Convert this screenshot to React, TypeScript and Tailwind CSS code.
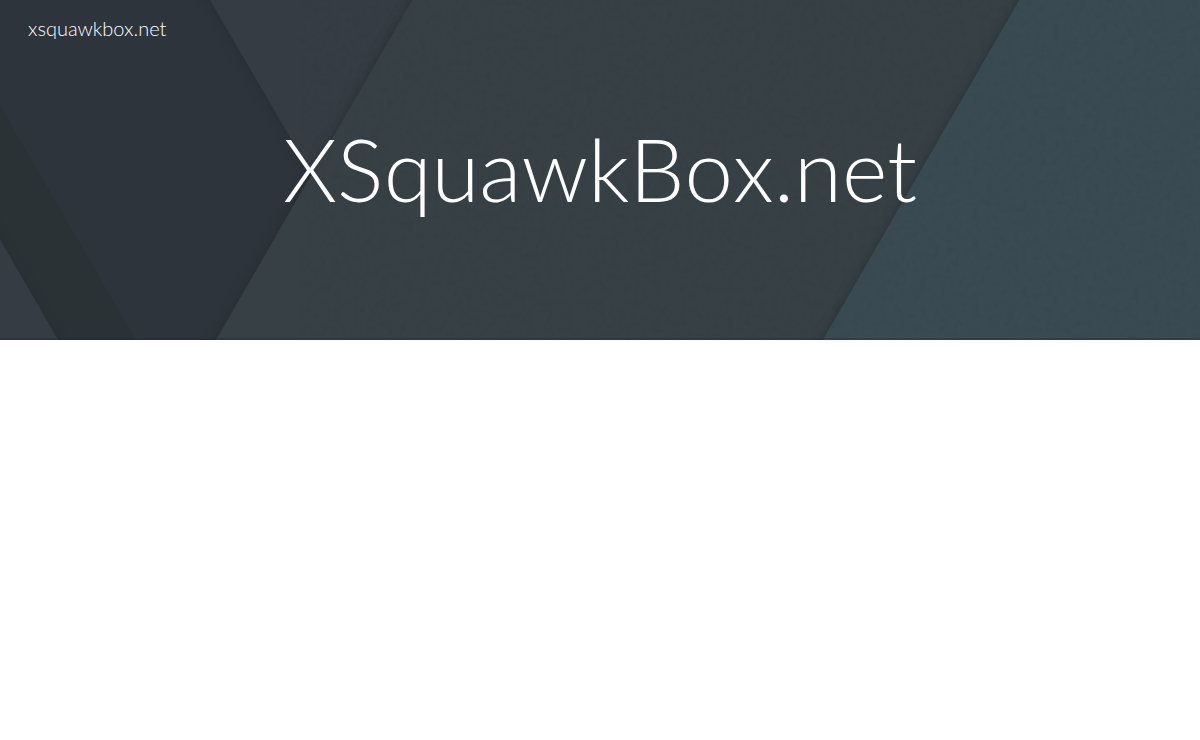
const BANNER_W = 1200;
const BANNER_H = 340;

function BannerArt() {
  return (
    <svg
      aria-hidden="true"
      viewBox={`0 0 ${BANNER_W} ${BANNER_H}`}
      preserveAspectRatio="xMidYMid slice"
      className="absolute inset-0 h-full w-full"
    >
      <defs>
        <filter id="shade" x="-20%" y="-20%" width="140%" height="140%" colorInterpolationFilters="sRGB">
          <feDropShadow dx="-1" dy="0" stdDeviation="5" floodColor="#20252a" floodOpacity="0.5" />
        </filter>
        <filter id="grain" x="0" y="0" width="100%" height="100%" colorInterpolationFilters="sRGB">
          <feTurbulence type="fractalNoise" baseFrequency="0.15" numOctaves="3" seed="4" />
          <feColorMatrix values="0 0 0 0 0.1  0 0 0 0 0.12  0 0 0 0 0.14  1 0 0 0 -0.5" />
        </filter>
        <linearGradient id="fade" x1="0" y1="0" x2="0" y2="1">
          <stop offset="0" stopColor="#2b3237" />
          <stop offset="0.35" stopColor="#2b3235" />
        </linearGradient>
      </defs>
      <rect width="1200" height="340" fill="#2d343b" />
      <polygon points="-4,98 136,340 58,340 -4,234" fill="url(#fade)" />
      <polygon points="-10,222 64,350 -10,350" fill="#353c44" filter="url(#shade)" />
      <polygon points="204,-10 330,206 440,206 440,-10" fill="#353c43" filter="url(#shade)" />
      <polygon points="418,-10 1040,-10 1040,350 210,350" fill="#364045" filter="url(#shade)" />
      <polygon points="1025,-10 1220,-10 1220,350 817,350" fill="#394a52" filter="url(#shade)" />
      <rect x="300" width="900" height="340" filter="url(#grain)" opacity="0.15" />
      <rect y="338" width="1200" height="2" fill="#20252a" opacity="0.3" />
    </svg>
  );
}

export default function App() {
  return (
    <div className="min-h-screen bg-white font-['Lato',sans-serif] text-white">
      <header className="relative h-[340px] overflow-hidden bg-[#364045]">
        <BannerArt />
        <nav className="relative px-7 pt-4">
          <a href="/" className="block text-xl font-light leading-6">
            xsquawkbox.net
          </a>
        </nav>
        <h1 className="relative pt-[72px] text-center text-[87px] font-light leading-[114px] [font-kerning:none]">
          XSquawkBox.net
        </h1>
      </header>
    </div>
  );
}
